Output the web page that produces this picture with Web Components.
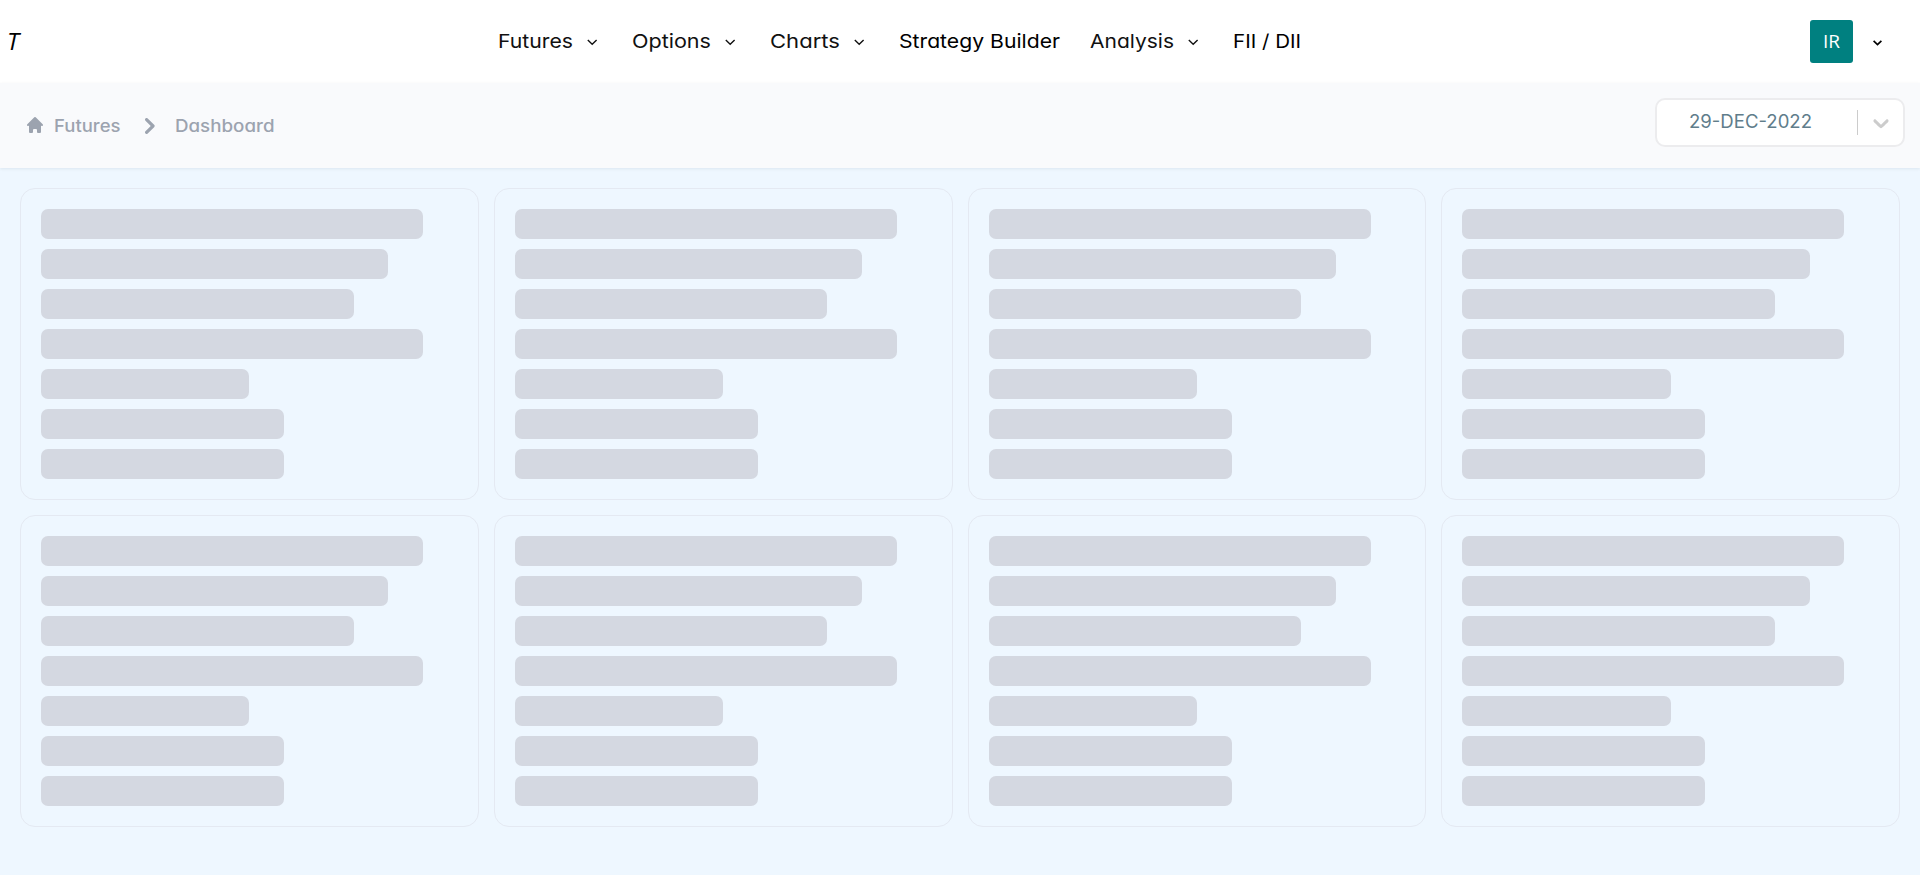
<!DOCTYPE html>
<html lang="en"><head><meta charset="utf-8"><title>Futures Dashboard</title>
<style>
body{margin:0;background:#eef7ff;font-family:Inter,"Open Sans",sans-serif;overflow:hidden}
</style></head><body>
<app-shell></app-shell>
<script>
function define(name, html, Base = HTMLElement) {
  const t = document.createElement('template');
  t.innerHTML = html;
  customElements.define(name, class extends Base {
    constructor() {
      super();
      this.attachShadow({mode: 'open'}).append(t.content.cloneNode(true));
    }
  });
}

// Label that widens its letters so that the text fills a given width.
class FitBase extends HTMLElement {
  connectedCallback() {
    const s = this.shadowRoot.querySelector('span');
    const width = +this.getAttribute('width');
    this.style.width = width + 'px';
    s.style.transform = `scaleX(${width / s.getBoundingClientRect().width})`;
  }
}
define('fit-label', `<style>:host{display:block;white-space:nowrap;font-feature-settings:"cv11","kern"}span{display:inline-block;transform-origin:0 50%}</style><span><slot></slot></span>`, FitBase);

define('nav-chevron', `<style>:host{display:block;width:20px;height:20px}svg{display:block}</style>
<svg width="20" height="20" viewBox="0 0 20 20" fill="none" stroke="currentColor" stroke-width="1.4"><path d="M5.8 8 10.200 12.200 14.600 8"/></svg>`);

define('nav-item', `<style>:host{display:flex;align-items:center;gap:9px;font-size:19px;line-height:30px;color:#111}</style><slot></slot>`);

define('top-bar', `<style>
:host{display:grid;grid-template-columns:498px 1fr auto;align-items:center;height:83px;background:#fff;color:#000}
.logo{padding:0 0 2px 7px;font:italic 400 24px/30px "Open Sans",sans-serif}
nav{display:flex;gap:30px}
.user{display:flex;align-items:center;gap:14px;padding-right:32px}
.avatar{width:43px;height:43px;border-radius:3px;background:teal;color:#fff;font:400 19px/43px "Open Sans",sans-serif;text-align:center}
</style>
<div class="logo">T</div>
<nav>
<nav-item><fit-label width="75">Futures</fit-label><nav-chevron></nav-chevron></nav-item>
<nav-item><fit-label width="79">Options</fit-label><nav-chevron></nav-chevron></nav-item>
<nav-item><fit-label width="70">Charts</fit-label><nav-chevron></nav-chevron></nav-item>
<nav-item style="color:#000"><fit-label width="161">Strategy Builder</fit-label></nav-item>
<nav-item><fit-label width="84">Analysis</fit-label><nav-chevron></nav-chevron></nav-item>
<nav-item style="color:#000"><fit-label width="68">FII / DII</fit-label></nav-item>
</nav>
<div class="user"><div class="avatar">IR</div>
<svg width="21" height="20" viewBox="0 0 21 20" fill="none" stroke="#000" stroke-width="1.7"><path d="M6.600 8.800 10.500 12.500 14.400 8.800"/></svg></div>`);

define('date-select', `<style>
:host{display:flex;align-items:center;box-sizing:border-box;width:250px;height:49px;border:2px solid #ececee;border-radius:10px;background:#fff;color:#607d8b;font-size:18px;line-height:24px}
fit-label{padding:0 0 2px 32px;flex:1}
i{width:1px;height:25px;background:#ccc}
svg{margin:1px 9px 0 10px}
</style>
<fit-label width="123">29-DEC-2022</fit-label><i></i>
<svg width="26" height="26" viewBox="0 0 20 20" fill="#ccc"><path d="M4.516 7.548c0.436-0.446 1.043-0.481 1.576 0l3.908 3.747 3.908-3.747c0.533-0.481 1.141-0.446 1.574 0 0.436 0.445 0.408 1.197 0 1.615-0.406 0.418-4.695 4.502-4.695 4.502-0.217 0.223-0.502 0.335-0.787 0.335s-0.570-0.112-0.789-0.335c0 0-4.287-4.084-4.695-4.502s-0.436-1.170 0-1.615z"/></svg>`);

define('crumb-bar', `<style>
:host{display:flex;justify-content:space-between;height:85px;box-sizing:border-box;padding:15px 15px 0 25px;background:#f9fafc;box-shadow:0 1px 3px rgba(0,40,70,.08);color:#9ca3af;position:relative}
.path{display:flex;align-items:center;height:56px;font-size:17px;font-weight:500;line-height:24px}
.home{margin:0 9px 2px 0}.sep{margin:0 20px 0 24.500px}
</style>
<div class="path">
<svg class="home" width="20" height="20" viewBox="0 0 20 20" fill="currentColor"><path d="M10.707 2.293a1 1 0 00-1.414 0l-7 7a1 1 0 001.414 1.414L4 10.414V17a1 1 0 001 1h2a1 1 0 001-1v-2a1 1 0 011-1h2a1 1 0 011 1v2a1 1 0 001 1h2a1 1 0 001-1v-6.586l.293.293a1 1 0 001.414-1.414l-7-7z"/></svg>
<fit-label width="66.500">Futures</fit-label>
<svg class="sep" width="9.600" height="16" viewBox="7 5 6 10" fill="currentColor"><path d="M7.293 14.707a1 1 0 010-1.414L10.586 10 7.293 6.707a1 1 0 011.414-1.414l4 4a1 1 0 010 1.414l-4 4a1 1 0 01-1.414 0z"/></svg>
<fit-label width="99.500">Dashboard</fit-label></div>
<date-select></date-select>`);

define('skeleton-card', `<style>
:host{display:flex;flex-direction:column;gap:10px;box-sizing:border-box;padding:20px;border:1px solid #e4e9f2;border-radius:15px}
div{height:30px;border-radius:7px;background:#d4d8e1;width:calc(100% * var(--n) / 12)}
</style>` + [11,10,9,11,6,7,7].map(n => `<div style="--n:${n}"></div>`).join(''));

define('app-shell', `<style>:host{display:block;height:875px;background:#eef7ff}
main{display:grid;grid-template-columns:repeat(4,1fr);gap:15px;padding:20px}</style>
<top-bar></top-bar><crumb-bar></crumb-bar><main>${'<skeleton-card></skeleton-card>'.repeat(8)}</main>`);
</script></body></html>
